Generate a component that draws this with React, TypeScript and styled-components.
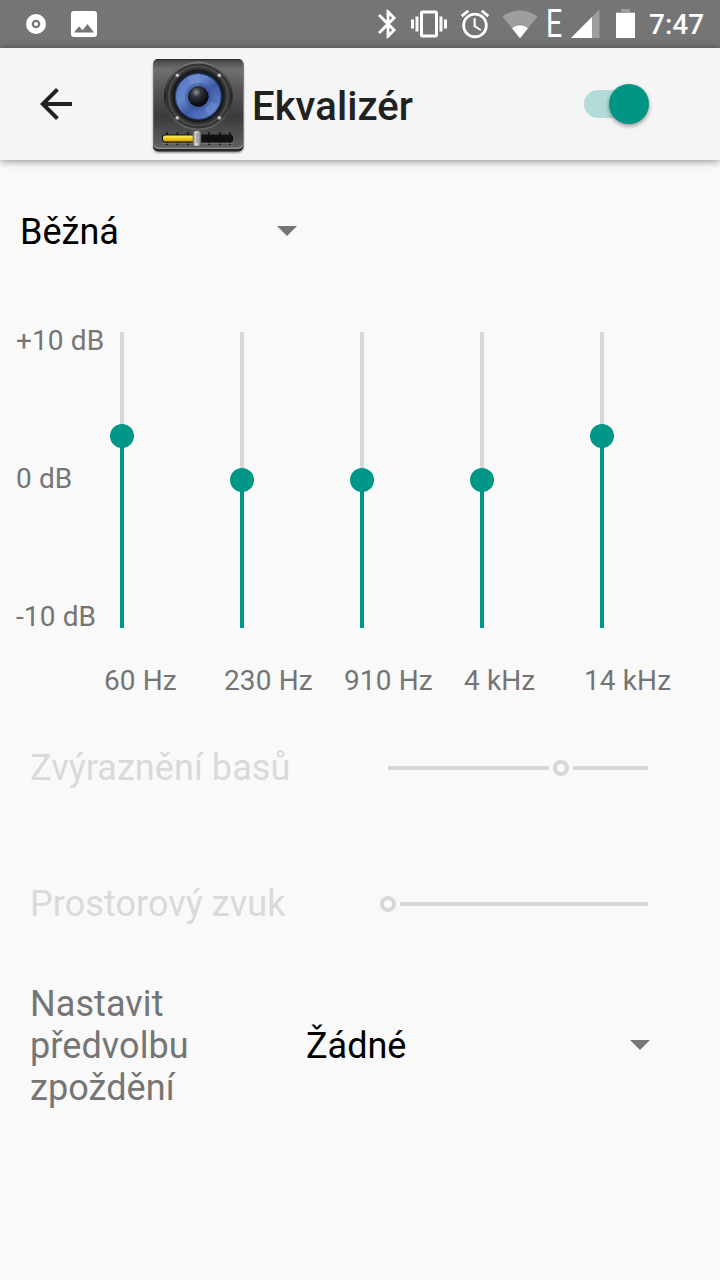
import React from "react";
import styled, { createGlobalStyle } from "styled-components";

const TEAL = "#009688";

const GlobalStyle = createGlobalStyle`
  * { box-sizing: border-box; }
  body { margin: 0; background: #f9f9f9; font-family: Roboto, sans-serif; }
`;

const Screen = styled.div`
  width: 720px;
  height: 1280px;
  display: flex;
  flex-direction: column;
  overflow: hidden;
  background: #f9f9f9;
`;

const StatusBar = styled.header`
  height: 48px;
  flex: none;
  display: flex;
  align-items: center;
  justify-content: space-between;
  padding: 0 17px 0 24px;
  background: #757575;
  color: #fff;
`;

const Notifications = styled.div`
  display: flex;
  align-items: center;
  gap: 23px;
`;

const SystemIcons = styled.div`
  display: flex;
  align-items: center;
`;

const StatusIcon = styled.svg<{ $gap?: number }>`
  display: block;
  flex: none;
  fill: #fff;
  margin-left: ${(p) => p.$gap ?? 0}px;
`;

const NetworkType = styled.span`
  width: 14px;
  margin-left: 9px;
  font-size: 38px;
  font-weight: 400;
  line-height: 48px;
  transform: translate(-1px, 0) scaleX(0.75);
  transform-origin: left center;
`;

const Clock = styled.span`
  width: 54px;
  margin-left: 14px;
  font-size: 28px;
  font-weight: 500;
  line-height: 48px;
  padding-top: 2px;
  white-space: nowrap;
`;

const Toolbar = styled.div`
  height: 112px;
  flex: none;
  display: flex;
  align-items: center;
  padding: 0 71px 0 32px;
  background: #f5f5f5;
  box-shadow: 0 1px 8px rgba(0, 0, 0, 0.45);
`;

const BackButton = styled.button`
  width: 48px;
  height: 48px;
  padding: 0;
  border: 0;
  background: none;
  svg { display: block; }
`;

const AppIcon = styled.svg`
  display: block;
  margin-left: 68px;
`;

const Title = styled.h1`
  flex: 1;
  margin: 6px 0 0 4px;
  font-size: 40px;
  font-weight: 500;
  line-height: 48px;
  letter-spacing: 0.08px;
  color: #212121;
`;

const Switch = styled.div`
  width: 65px;
  height: 40px;
  display: flex;
  align-items: center;
  position: relative;
`;

const SwitchTrack = styled.div`
  width: 56px;
  height: 28px;
  border-radius: 14px;
  background: #b3dbd7;
`;

const SwitchThumb = styled.div`
  position: absolute;
  right: 0;
  top: 0;
  width: 40px;
  height: 40px;
  border-radius: 50%;
  background: #009485;
  box-shadow: 0 2px 4px rgba(0, 0, 0, 0.4);
`;

const Content = styled.main`
  display: flex;
  flex-direction: column;
`;

const Spinner = styled.div<{ $width: number }>`
  width: ${(p) => p.$width}px;
  display: flex;
  align-items: center;
  justify-content: space-between;
  font-size: 36px;
  line-height: 42px;
  color: #000;
`;

const Caret = styled.svg`
  display: block;
  fill: #757575;
  margin-top: -3px;
`;

const PresetRow = styled.div`
  padding: 51px 0 0 20px;
`;

const Equalizer = styled.section`
  display: flex;
  margin-top: 71px;
  padding-left: 16px;
  font-size: 28px;
  line-height: 33px;
  letter-spacing: 0.12px;
  color: #757575;
  white-space: nowrap;
`;

const Scale = styled.div`
  width: 88px;
  height: 309px;
  display: flex;
  flex-direction: column;
  justify-content: space-between;
`;

const Band = styled.div`
  width: 120px;
  padding-top: 8px;
`;

const BandTrack = styled.div`
  position: relative;
  width: 4px;
  height: 296px;
  margin: 0 0 36px 16px;
  background: #d7d7d7;
`;

const BandFill = styled.div<{ $level: number }>`
  position: absolute;
  bottom: 0;
  width: 4px;
  height: ${(p) => p.$level}px;
  background: ${TEAL};
`;

const BandThumb = styled.div<{ $level: number }>`
  position: absolute;
  left: -10px;
  bottom: ${(p) => p.$level - 12}px;
  width: 24px;
  height: 24px;
  border-radius: 50%;
  background: ${TEAL};
`;

const EffectRow = styled.div<{ $top: number }>`
  display: flex;
  align-items: center;
  justify-content: space-between;
  margin-top: ${(p) => p.$top}px;
  padding: 0 72px 0 30px;
  font-size: 36px;
  line-height: 42px;
  letter-spacing: 0.06px;
  color: #d9d9d9;
`;

const DisabledSlider = styled.div<{ $width: number }>`
  display: flex;
  align-items: center;
  gap: 4px;
  width: ${(p) => p.$width}px;
`;

const Line = styled.div<{ $width?: number }>`
  height: 4px;
  flex: ${(p) => (p.$width === undefined ? "1" : `0 0 ${p.$width}px`)};
  background: #d7d7d7;
`;

const Ring = styled.div`
  width: 16px;
  height: 16px;
  flex: none;
  border: 4px solid #d7d7d7;
  border-radius: 50%;
`;

const DelayRow = styled.div`
  display: flex;
  align-items: center;
  margin-top: 58px;
  padding-left: 30px;
`;

const DelayLabel = styled.span`
  width: 276px;
  padding-right: 60px;
  font-size: 36px;
  line-height: 42px;
  letter-spacing: 0.08px;
  color: #757575;
`;

const bands = [
  { label: "60 Hz", level: 192 },
  { label: "230 Hz", level: 148 },
  { label: "910 Hz", level: 148 },
  { label: "4 kHz", level: 148 },
  { label: "14 kHz", level: 192 },
];

const Arrow = () => (
  <Caret width="20" height="10" viewBox="0 0 20 10">
    <path d="M0 0h20L10 10z" />
  </Caret>
);

const SpeakerIcon = () => (
  <AppIcon width="100" height="100" viewBox="148 54 100 100">
    <defs>
      <linearGradient id="body" x1="0" y1="0" x2="0" y2="1">
        <stop offset="0" stopColor="#444" />
        <stop offset=".12" stopColor="#707070" />
        <stop offset=".35" stopColor="#555" />
        <stop offset=".65" stopColor="#3b3b3b" />
        <stop offset="1" stopColor="#606060" />
      </linearGradient>
      <linearGradient id="frame" x1="0" y1="0" x2="0" y2="1">
        <stop offset="0" stopColor="#777" />
        <stop offset=".5" stopColor="#222" />
        <stop offset="1" stopColor="#666" />
      </linearGradient>
      <linearGradient id="cone" x1="0" y1="0" x2="1" y2="1">
        <stop offset="0" stopColor="#4f6fb8" />
        <stop offset=".35" stopColor="#6688cd" />
        <stop offset=".55" stopColor="#3e5ca6" />
        <stop offset="1" stopColor="#6f91d8" />
      </linearGradient>
      <radialGradient id="dome" cx=".4" cy=".3" r=".65">
        <stop offset="0" stopColor="#8d949d" />
        <stop offset=".35" stopColor="#30343a" />
        <stop offset="1" stopColor="#05070b" />
      </radialGradient>
      <linearGradient id="level" x1="0" y1="0" x2="0" y2="1">
        <stop offset="0" stopColor="#fff16b" />
        <stop offset=".45" stopColor="#f5d021" />
        <stop offset="1" stopColor="#d29a06" />
      </linearGradient>
      <linearGradient id="knob" x1="0" y1="0" x2="1" y2="0">
        <stop offset="0" stopColor="#777" />
        <stop offset=".4" stopColor="#eee" />
        <stop offset="1" stopColor="#666" />
      </linearGradient>
      <filter id="drop" x="-20%" y="-20%" width="140%" height="140%">
        <feGaussianBlur stdDeviation="1.3" />
      </filter>
    </defs>
    <rect x="153" y="61" width="90.5" height="92" rx="6" fill="#000" opacity=".4" filter="url(#drop)" />
    <rect x="153" y="59" width="90.5" height="92.5" rx="5" fill="#292929" />
    <rect x="153" y="59" width="90.5" height="90" rx="5" fill="#8a8a8a" />
    <rect x="153.5" y="59" width="89.5" height="88.5" rx="5" fill="url(#body)" />
    <path d="M156 59.7h84" stroke="#2e2e2e" strokeWidth="1.2" />
    <circle cx="198.3" cy="96" r="34.5" fill="url(#frame)" />
    <circle cx="198.3" cy="96" r="32.5" fill="#333" />
    <circle cx="198.3" cy="96" r="29.5" fill="none" stroke="#505050" strokeWidth="1.5" />
    <circle cx="198.3" cy="96" r="26.5" fill="#191c22" />
    <circle cx="198.3" cy="96.5" r="22.8" fill="url(#cone)" stroke="#28457f" strokeWidth="1" />
    <path d="M198.3 96L187 77a22 22 0 0 1 13-3zM198.3 96l20 9a22 22 0 0 1-10 10z" fill="#8dabe8" opacity=".28" />
    <circle cx="198.3" cy="96.5" r="13.5" fill="#36539b" opacity=".5" />
    <circle cx="198.3" cy="96.5" r="10.4" fill="url(#dome)" />
    {[177.3, 219.3].map((x) =>
      [75.3, 117.8].map((y) => (
        <circle key={`${x}-${y}`} cx={x} cy={y} r="1.9" fill="#d0d0d0" stroke="#555" strokeWidth=".6" />
      ))
    )}
    <path d="M167 132v13M177.5 132v13M188 132v13M209 132v13M220 132v13M230 132v13" stroke="#151515" strokeWidth="1.6" />
    <rect x="162" y="134.5" width="71" height="8" rx="3" fill="#111" />
    <rect x="163" y="135.5" width="32" height="6" rx="2" fill="url(#level)" />
    <path d="M162 143.5h71" stroke="#777" strokeWidth=".8" />
    <rect x="193" y="131" width="8" height="15" rx="1.5" fill="url(#knob)" stroke="#555" strokeWidth=".5" />
    <path d="M197 133v10" stroke="#777" strokeWidth="1" />
  </AppIcon>
);

export default function App() {
  return (
    <Screen>
      <GlobalStyle />
      <StatusBar>
        <Notifications>
          <StatusIcon width="24" height="24" viewBox="0 0 24 24">
            <circle cx="12" cy="12" r="10" />
            <circle cx="12" cy="12" r="3.2" fill="none" stroke="#757575" strokeWidth="2.2" />
          </StatusIcon>
          <StatusIcon width="26" height="26" viewBox="0 0 26 26">
            <path
              fillRule="evenodd"
              d="M3 0h20a3 3 0 0 1 3 3v20a3 3 0 0 1-3 3H3a3 3 0 0 1-3-3V3a3 3 0 0 1 3-3zM3 21.5h20l-6.5-8.5-5 6.3-3.5-4z"
            />
          </StatusIcon>
        </Notifications>
        <SystemIcons>
          <StatusIcon width="34" height="34" viewBox="0 0 24 24">
            <path d="M17.71 7.71L12 2h-1v7.59L6.41 5 5 6.41 10.59 12 5 17.59 6.41 19 11 14.41V22h1l5.71-5.71-4.3-4.29 4.3-4.29zM13 5.83l1.88 1.88L13 9.59V5.83zm1.88 10.46L13 18.17v-3.76l1.88 1.88z" />
          </StatusIcon>
          <StatusIcon $gap={6} width="36" height="36" viewBox="0 0 24 24">
            <path d="M0 15h2V9H0v6zm3 2h2V7H3v10zm19-8v6h2V9h-2zm-3 8h2V7h-2v10zM16.5 3h-9C6.67 3 6 3.67 6 4.5v15c0 .83.67 1.5 1.5 1.5h9c.83 0 1.5-.67 1.5-1.5v-15c0-.83-.67-1.5-1.5-1.5zM16 19H8V5h8v14z" />
          </StatusIcon>
          <StatusIcon $gap={11} width="34" height="34" viewBox="0 0 24 24">
            <path d="M22 5.72l-4.6-3.86-1.29 1.53 4.6 3.86L22 5.72zM7.88 3.39L6.6 1.86 2 5.71l1.29 1.53 4.59-3.85zM12.5 8H11v6l4.75 2.85.75-1.23-4-2.37V8zM12 4c-4.97 0-9 4.03-9 9s4.02 9 9 9c4.97 0 9-4.03 9-9s-4.03-9-9-9zm0 16c-3.87 0-7-3.13-7-7s3.13-7 7-7 7 3.13 7 7-3.13 7-7 7z" />
          </StatusIcon>
          <StatusIcon $gap={10} width="36" height="36" viewBox="0 0 24 24">
            <path opacity=".3" d="M12.01 21.49L23.64 7c-.45-.34-4.93-4-11.64-4C5.28 3 .81 6.66.36 7l11.63 14.49.01.01.01-.01z" />
            <path d="M6.67 14.86L12 21.49v.01l.01-.01 5.33-6.63C17.06 14.65 15.03 13 12 13s-5.06 1.65-5.33 1.86z" />
          </StatusIcon>
          <NetworkType>E</NetworkType>
          <StatusIcon $gap={10} width="29" height="30" viewBox="0 0 29 30">
            <path opacity=".3" d="M0 29L28.5 .5V29z" />
            <path d="M0 29L21 8v21z" />
          </StatusIcon>
          <StatusIcon $gap={16} width="19" height="30" viewBox="0 0 19 30">
            <path opacity=".3" d="M5 0h9v3h5v1H0V3h5z" />
            <path d="M0 4h19v25H0z" />
          </StatusIcon>
          <Clock>7:47</Clock>
        </SystemIcons>
      </StatusBar>

      <Toolbar>
        <BackButton aria-label="Zpět">
          <svg width="48" height="48" viewBox="0 0 24 24" fill="#212121">
            <path d="M20 11H7.83l5.59-5.59L12 4l-8 8 8 8 1.41-1.41L7.83 13H20v-2z" />
          </svg>
        </BackButton>
        <SpeakerIcon />
        <Title>Ekvalizér</Title>
        <Switch>
          <SwitchTrack />
          <SwitchThumb />
        </Switch>
      </Toolbar>

      <Content>
        <PresetRow>
          <Spinner $width={277}>
            <span>Běžná</span>
            <Arrow />
          </Spinner>
        </PresetRow>

        <Equalizer>
          <Scale>
            <span>+10 dB</span>
            <span>0 dB</span>
            <span>-10 dB</span>
          </Scale>
          {bands.map((b) => (
            <Band key={b.label}>
              <BandTrack>
                <BandFill $level={b.level} />
                <BandThumb $level={b.level} />
              </BandTrack>
              {b.label}
            </Band>
          ))}
        </Equalizer>

        <EffectRow $top={50}>
          <span>Zvýraznění basů</span>
          <DisabledSlider $width={260}>
            <Line $width={161} />
            <Ring />
            <Line />
          </DisabledSlider>
        </EffectRow>
        <EffectRow $top={94}>
          <span>Prostorový zvuk</span>
          <DisabledSlider $width={268}>
            <Ring />
            <Line />
          </DisabledSlider>
        </EffectRow>

        <DelayRow>
          <DelayLabel>Nastavit předvolbu zpoždění</DelayLabel>
          <Spinner $width={344}>
            <span>Žádné</span>
            <Arrow />
          </Spinner>
        </DelayRow>
      </Content>
    </Screen>
  );
}
